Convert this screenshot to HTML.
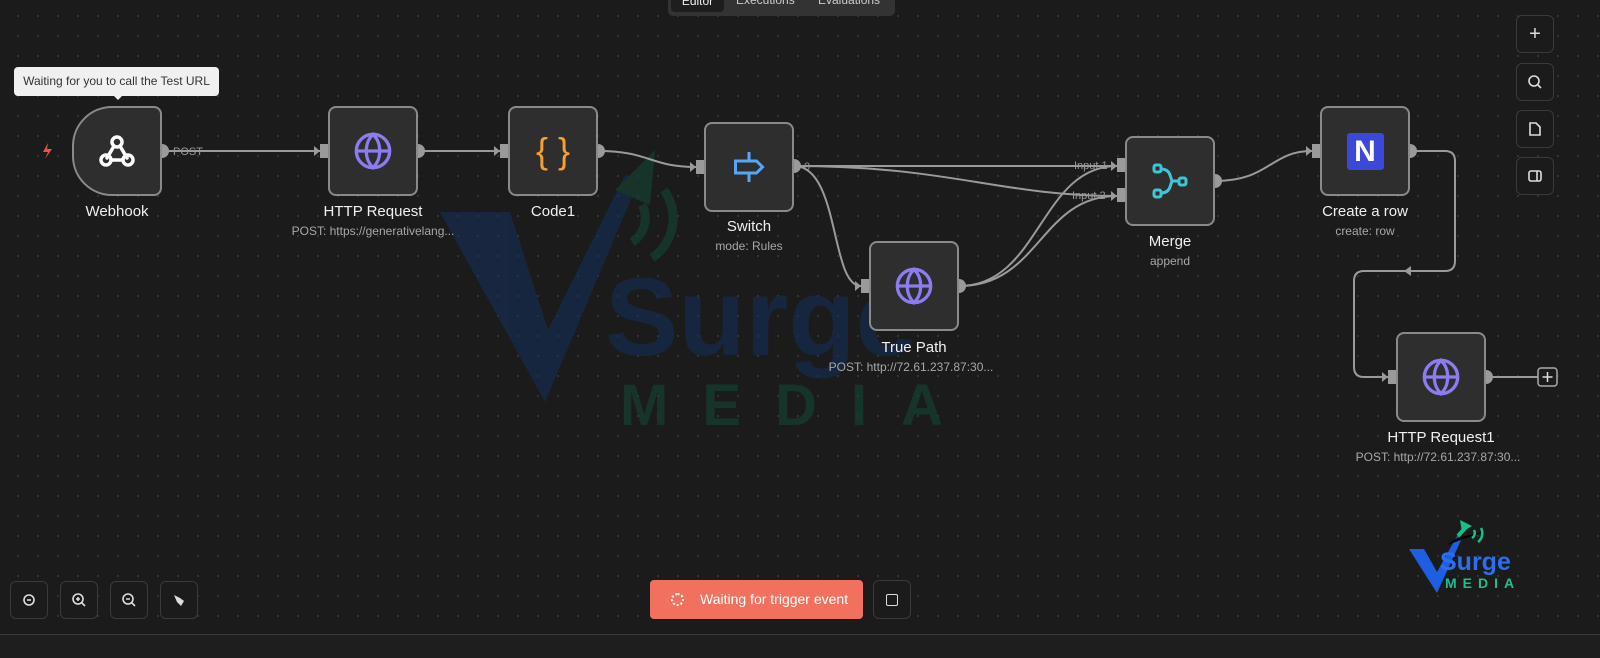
<!DOCTYPE html>
<html><head><meta charset="utf-8"><style>
*{box-sizing:border-box;margin:0;padding:0}
body{width:1600px;height:658px;overflow:hidden;background:#1b1b1b;font-family:"Liberation Sans",sans-serif;position:relative;
background-image:radial-gradient(circle,#3a3a3a 0.8px,transparent 1.1px);background-size:20px 20px;background-position:8px 6px}
.node{position:absolute;width:90px;height:90px;background:#2e2e2e;border:2px solid #8a8a8a;border-radius:8px;display:flex;align-items:center;justify-content:center}
.lbl{position:absolute;width:240px;text-align:center;color:#f0f0f0;font-size:15px}
.sub{position:absolute;width:240px;text-align:center;color:#a8a8a8;font-size:12px}
.btn{position:absolute;width:38px;height:38px;border:1px solid #3a3a3a;border-radius:6px;background:#1b1b1b;display:flex;align-items:center;justify-content:center;color:#ddd}
</style></head><body>
<svg style="position:absolute;left:0;top:0" width="1600" height="658">
<g opacity="0.55">
<path d="M440 212 L510 212 L548 330 L625 175 L640 178 L545 402 Z" fill="#15305e"/>
<path d="M615 190 L655 150 L650 205 Z" fill="#124a36"/>
<path d="M632 242 A28 28 0 0 0 642 205 M652 258 A48 48 0 0 0 664 190" stroke="#124a36" stroke-width="9" fill="none"/>
<text x="605" y="355" font-family="Liberation Sans" font-weight="bold" font-size="110" fill="#15305e">Surge</text>
<text x="620" y="425" font-family="Liberation Sans" font-weight="bold" font-size="58" letter-spacing="34" fill="#124a36">MEDIA</text>
</g>
<g stroke="#9a9a9a" stroke-width="2" fill="none">
<path d="M162 151 L320 151"/><path d="M418 151 L500 151"/>
<path d="M598 151 C650 151 650 167 696 167"/>
<path d="M794 166 L1117 166"/>
<path d="M794 166 C950 166 1000 196 1117 196"/>
<path d="M794 166 C840 166 830 286 861 286"/>
<path d="M959 286 C1040 286 1040 166 1117 166"/>
<path d="M959 286 C1040 286 1040 196 1117 196"/>
<path d="M1215 181 C1270 181 1270 151 1312 151"/>
<path d="M1410 151 L1445 151 Q1455 151 1455 161 L1455 261 Q1455 271 1445 271 L1364 271 Q1354 271 1354 281 L1354 367 Q1354 377 1364 377 L1388 377"/>
<path d="M1486 377 L1538 377"/>
</g>
<g fill="#9a9a9a">
<path d="M314 146 L320 151 L314 156Z"/><path d="M494 146 L500 151 L494 156Z"/><path d="M690 162 L696 167 L690 172Z"/>
<path d="M1111 161 L1117 166 L1111 171Z"/><path d="M1111 191 L1117 196 L1111 201Z"/><path d="M855 281 L861 286 L855 291Z"/>
<path d="M1306 146 L1312 151 L1306 156Z"/><path d="M1382 372 L1388 377 L1382 382Z"/><path d="M1404 271 L1411 266 L1411 276 Z"/>
<rect x="320" y="144" width="8" height="14"/><rect x="500" y="144" width="8" height="14"/><rect x="696" y="160" width="8" height="14"/>
<rect x="861" y="279" width="8" height="14"/><rect x="1117" y="158" width="8" height="14"/><rect x="1117" y="188" width="8" height="14"/>
<rect x="1312" y="144" width="8" height="14"/><rect x="1388" y="370" width="8" height="14"/>
<circle cx="162" cy="151" r="7"/><circle cx="418" cy="151" r="7"/><circle cx="598" cy="151" r="7"/><circle cx="794" cy="166" r="7"/>
<circle cx="959" cy="286" r="7"/><circle cx="1215" cy="181" r="7"/><circle cx="1410" cy="151" r="7"/><circle cx="1486" cy="377" r="7"/>
</g>
<rect x="1538" y="368" width="19" height="18" rx="3" fill="#1b1b1b" stroke="#aaa" stroke-width="1.5"/>
<path d="M1547.5 372v10M1542.5 377h10" stroke="#ddd" stroke-width="1.5"/>
<g font-family="Liberation Sans" font-size="11" fill="#999">
<text x="173" y="155">POST</text><text x="804" y="170">0</text>
<text x="1074" y="169">Input 1</text><text x="1072" y="199">Input 2</text>
</g>
<path d="M48 143 L43 152 L48 152 L45 159 L52 149 L47 149 Z" fill="#e5534b"/>
<!-- small logo -->
<path d="M1409 549 L1424 549 L1437 572 L1457 536 L1462 538 L1437 593 Z" fill="#1d5fe0"/>
<path d="M1452 540 L1490 532 M1453 525 L1490 532" stroke="none"/>
<path d="M1451 530 L1490 532" stroke="none"/>
<path d="M1456 536 L1488 532" stroke="none"/>
<path d="M1450 540 L1488 532" stroke="none"/>
<path d="M1453 537 L1489 531" stroke="none"/>
<path d="M1448 545 L1490 532" stroke="none"/>
<path d="M1455 538 L1489 531" stroke="none"/>
<path d="M1456 539 L1488 531" stroke="none"/>
<path d="M1457 538 L1490 532" stroke="none"/>
<path d="M1447 545 L1457 538 L1483 532" stroke="none"/>
<path d="M1444 548 L1488 532" stroke="none"/>
<path d="M1448 540 L1480 520" stroke="none"/>
<path d="M1445 547 L1488 531" stroke="none"/>
<path d="M1446 546 L1488 532" stroke="none"/>
<path d="M1440 555 L1488 532" stroke="none"/>
<path d="M1454 536 L1489 531" stroke="none"/>
<path d="M1449 542 L1488 532" stroke="none"/>
<path d="M1441 553 L1488 532" stroke="none"/>
<path d="M1452 538 L1488 532" stroke="none"/>
<path d="M1456 537 L1488 531" stroke="none"/>
<path d="M1443 550 L1488 532" stroke="none"/>
<path d="M1450 541 L1488 532" stroke="none"/>
<path d="M1458 536 L1466 527" stroke="#16c08a" stroke-width="4"/>
<path d="M1460 520 L1472 526 L1462 532 Z" fill="#16c08a"/>
<path d="M1472 538 A6 6 0 0 0 1474 530 M1478 542 A11 11 0 0 0 1481 528" stroke="#16c08a" stroke-width="2.5" fill="none"/>
<text x="1440" y="570" font-family="Liberation Sans" font-weight="bold" font-size="25" fill="#2a6ff0">Surge</text>
<text x="1445" y="588" font-family="Liberation Sans" font-weight="bold" font-size="14" letter-spacing="6" fill="#1ec08a">MEDIA</text>
</svg>

<div style="position:absolute;left:668px;top:-6px;width:227px;height:22px;background:#333;border-radius:5px;font-size:12px;color:#ccc">
<span style="position:absolute;left:3px;top:2px;width:53px;height:16px;background:#1e1e1e;border-radius:4px;text-align:center;line-height:10px;color:#eee">Editor</span>
<span style="position:absolute;left:68px;top:1px;line-height:10px">Executions</span>
<span style="position:absolute;left:150px;top:1px;line-height:10px">Evaluations</span></div>

<div style="position:absolute;left:14px;top:67px;width:205px;height:29px;background:#f0f0f0;border-radius:4px;color:#333;font-size:12px;line-height:29px;text-align:center">Waiting for you to call the Test URL</div>
<div style="position:absolute;left:113px;top:95px;width:0;height:0;border-left:5px solid transparent;border-right:5px solid transparent;border-top:5px solid #f0f0f0"></div>

<div class="node" style="left:72px;top:106px;border-radius:40px 8px 8px 40px">
<svg width="40" height="40" viewBox="0 0 40 40" fill="none" stroke="#fff" stroke-width="3.5" stroke-linecap="round"><circle cx="20" cy="11" r="5"/><circle cx="9" cy="29" r="5"/><circle cx="31" cy="29" r="5"/><path d="M17 15 L10 27 M14 29 H26 M23 15 L30 27"/></svg></div>
<div class="node" style="left:328px;top:106px"><svg width="40" height="40" viewBox="0 0 24 24" fill="none" stroke="#8b7cf0" stroke-width="2"><circle cx="12" cy="12" r="10"/><path d="M2 12h20M12 2c3 3 4 6 4 10s-1 7-4 10c-3-3-4-6-4-10s1-7 4-10z"/></svg></div>
<div class="node" style="left:508px;top:106px"><span style="color:#f5a030;font-size:36px;font-family:'Liberation Sans',sans-serif">{ }</span></div>
<div class="node" style="left:704px;top:122px"><svg width="36" height="36" viewBox="0 0 24 24" fill="none" stroke="#55a6f5" stroke-width="2"><path d="M3 8h14l4 4-4 4H3z M12 16v6 M12 2v6"/></svg></div>
<div class="node" style="left:869px;top:241px"><svg width="40" height="40" viewBox="0 0 24 24" fill="none" stroke="#8b7cf0" stroke-width="2"><circle cx="12" cy="12" r="10"/><path d="M2 12h20M12 2c3 3 4 6 4 10s-1 7-4 10c-3-3-4-6-4-10s1-7 4-10z"/></svg></div>
<div class="node" style="left:1125px;top:136px"><svg width="40" height="40" viewBox="0 0 40 40" fill="none" stroke="#3fc6d6" stroke-width="3"><rect x="4" y="4" width="7" height="7" rx="2"/><rect x="4" y="29" width="7" height="7" rx="2"/><rect x="29" y="17" width="7" height="7" rx="2"/><path d="M11 8 Q18 8 20 14 L22 20 H29 M22 20 L20 26 Q18 32 11 32"/></svg></div>
<div class="node" style="left:1320px;top:106px"><div style="width:37px;height:37px;background:#3b48d8;border-radius:3px;color:#fff;font-weight:bold;font-size:30px;line-height:37px;text-align:center">N</div></div>
<div class="node" style="left:1396px;top:332px"><svg width="40" height="40" viewBox="0 0 24 24" fill="none" stroke="#8b7cf0" stroke-width="2"><circle cx="12" cy="12" r="10"/><path d="M2 12h20M12 2c3 3 4 6 4 10s-1 7-4 10c-3-3-4-6-4-10s1-7 4-10z"/></svg></div>

<div class="lbl" style="left:-3px;top:203px">Webhook</div>
<div class="lbl" style="left:253px;top:203px">HTTP Request</div><div class="sub" style="left:253px;top:224px">POST: https://generativelang...</div>
<div class="lbl" style="left:433px;top:203px">Code1</div>
<div class="lbl" style="left:629px;top:218px">Switch</div><div class="sub" style="left:629px;top:239px">mode: Rules</div>
<div class="lbl" style="left:794px;top:339px">True Path</div><div class="sub" style="left:791px;top:360px">POST: http://72.61.237.87:30...</div>
<div class="lbl" style="left:1050px;top:233px">Merge</div><div class="sub" style="left:1050px;top:254px">append</div>
<div class="lbl" style="left:1245px;top:203px">Create a row</div><div class="sub" style="left:1245px;top:224px">create: row</div>
<div class="lbl" style="left:1321px;top:429px">HTTP Request1</div><div class="sub" style="left:1318px;top:450px">POST: http://72.61.237.87:30...</div>

<div class="btn" style="left:1516px;top:15px;font-size:20px">+</div>
<div class="btn" style="left:1516px;top:63px"><svg width="16" height="16" viewBox="0 0 16 16" fill="none" stroke="#ddd" stroke-width="1.6"><circle cx="7" cy="7" r="5"/><path d="M11 11l3 3"/></svg></div>
<div class="btn" style="left:1516px;top:110px"><svg width="16" height="16" viewBox="0 0 16 16" fill="none" stroke="#ddd" stroke-width="1.6"><path d="M3 2h6l4 4v8H3z"/></svg></div>
<div class="btn" style="left:1516px;top:157px"><svg width="16" height="16" viewBox="0 0 16 16" fill="none" stroke="#ddd" stroke-width="1.6"><rect x="2" y="3" width="12" height="10" rx="2"/><path d="M10 3v10"/></svg></div>

<div class="btn" style="left:10px;top:581px"><svg width="16" height="16" viewBox="0 0 16 16" fill="none" stroke="#ddd" stroke-width="1.6"><circle cx="8" cy="8" r="5"/><path d="M6 8h4"/></svg></div>
<div class="btn" style="left:60px;top:581px"><svg width="16" height="16" viewBox="0 0 16 16" fill="none" stroke="#ddd" stroke-width="1.6"><circle cx="7" cy="7" r="5"/><path d="M11 11l3 3M5 7h4M7 5v4"/></svg></div>
<div class="btn" style="left:110px;top:581px"><svg width="16" height="16" viewBox="0 0 16 16" fill="none" stroke="#ddd" stroke-width="1.6"><circle cx="7" cy="7" r="5"/><path d="M11 11l3 3M5 7h4"/></svg></div>
<div class="btn" style="left:160px;top:581px"><svg width="16" height="16" viewBox="0 0 16 16" fill="#ddd"><path d="M3 3l6 3 4 3-3 5-4-4z"/></svg></div>

<div style="position:absolute;left:650px;top:580px;width:213px;height:39px;background:#f2705e;border-radius:4px;color:#fff;font-size:14px;line-height:39px;padding-left:50px">Waiting for trigger event</div>
<div style="position:absolute;left:671px;top:593px;width:13px;height:13px;border:2px dotted #fff;border-radius:50%"></div>
<div class="btn" style="left:873px;top:580px;height:39px"><div style="width:12px;height:12px;border:1.6px solid #ddd;border-radius:2px"></div></div>

<div style="position:absolute;left:0;top:634px;width:1600px;height:24px;background:#1e1e1e;border-top:1px solid #3a3a3a"></div>
</body></html>
